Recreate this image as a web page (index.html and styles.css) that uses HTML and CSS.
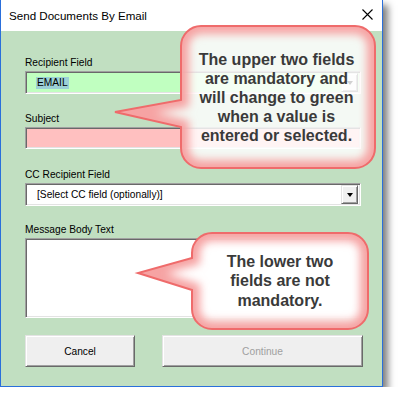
FILE: index.html
```html
<!DOCTYPE html>
<html>
<head>
<meta charset="utf-8">
<link rel="stylesheet" href="styles.css">
</head>
<body>
<div class="window">
  <div class="titlebar">
    <span class="title">Send Documents By Email</span>
    <svg class="close" width="11" height="11" viewBox="0 0 11 11"><path d="M0.5 0.5 L10.5 10.5 M10.5 0.5 L0.5 10.5" stroke="#000" stroke-width="1.1" fill="none"/></svg>
  </div>
  <div class="content">
    <div class="group g-recipient">
      <div class="label">Recipient Field</div>
      <div class="field combo green"><span class="sel">EMAIL</span><span class="ddbtn"><span class="arrow"></span></span></div>
    </div>
    <div class="group g-subject">
      <div class="label">Subject</div>
      <div class="field pink"></div>
    </div>
    <div class="group g-cc">
      <div class="label">CC Recipient Field</div>
      <div class="field combo white"><span class="val">[Select CC field (optionally)]</span><span class="ddbtn"><span class="arrow"></span></span></div>
    </div>
    <div class="group g-msg">
      <div class="label">Message Body Text</div>
      <div class="field memo white"></div>
    </div>
    <div class="buttons">
      <div class="btn cancel">Cancel</div>
      <div class="btn continue disabled">Continue</div>
    </div>
  </div>

  <div class="callout c1">
    <svg class="cshape" width="194" height="142" viewBox="0 0 194 142">
      <defs>
        <path id="p1" d="M20,0 H174 A20,20 0 0 1 194,20 V122 A20,20 0 0 1 174,142 H20 A20,20 0 0 1 0,122 V101 L-66,86 L0,74 V20 A20,20 0 0 1 20,0 Z"/>
        <clipPath id="clip1"><use href="#p1"/></clipPath>
        <filter id="blur1" filterUnits="userSpaceOnUse" x="-120" y="-60" width="420" height="280"><feGaussianBlur stdDeviation="4"/></filter>
      </defs>
      <use href="#p1" fill="rgba(255,255,255,0.82)"/>
      <g clip-path="url(#clip1)"><use href="#p1" fill="none" stroke="#f6a3a3" stroke-width="16" filter="url(#blur1)"/></g>
      <use href="#p1" fill="none" stroke="#ef6b6b" stroke-width="2"/>
    </svg>
    <div class="ctext">The upper two fields<br>are mandatory and<br>will change to green<br>when a value is<br>entered or selected.</div>
  </div>

  <div class="callout c2">
    <svg class="cshape" width="176" height="96" viewBox="0 0 176 96">
      <defs>
        <path id="p2" d="M20,0 H156 A20,20 0 0 1 176,20 V76 A20,20 0 0 1 156,96 H20 A20,20 0 0 1 0,76 V57 L-54,40 L0,25 V20 A20,20 0 0 1 20,0 Z"/>
        <clipPath id="clip2"><use href="#p2"/></clipPath>
        <filter id="blur2" filterUnits="userSpaceOnUse" x="-120" y="-60" width="420" height="240"><feGaussianBlur stdDeviation="4"/></filter>
      </defs>
      <use href="#p2" fill="rgba(255,255,255,0.9)"/>
      <g clip-path="url(#clip2)"><use href="#p2" fill="none" stroke="#f6a3a3" stroke-width="16" filter="url(#blur2)"/></g>
      <use href="#p2" fill="none" stroke="#ef6b6b" stroke-width="2"/>
    </svg>
    <div class="ctext">The lower two<br>fields are not<br>mandatory.</div>
  </div>
</div>
</body>
</html>
```

FILE: styles.css
```css
html, body {
  margin: 0;
  padding: 0;
  background: #ffffff;
}

.window {
  position: relative;
  width: 381px;
  height: 386px;
  border: 1px solid #2a6fdb;
  border-top: none;
  background: #c1dfc1;
  box-shadow: 5px 5px 7px rgba(0, 0, 0, 0.5);
  font-family: "Liberation Sans", Arial, sans-serif;
  color: #000;
}

.titlebar {
  height: 31px;
  background: #ffffff;
  display: flex;
  align-items: center;
  justify-content: space-between;
  padding: 0 9px 0 8px;
}

.title {
  font-size: 11.6px;
  line-height: 31px;
  color: #000;
}

.close {
  display: block;
  margin-top: -2px;
}

.content {
  padding: 25px 0 0 24px;
  display: flex;
  flex-direction: column;
}

.label {
  font-size: 10.2px;
  line-height: 13px;
  height: 13px;
  margin-bottom: 2px;
}

.g-subject { margin-top: 18px; }
.g-cc { margin-top: 19px; }
.g-msg { margin-top: 17px; }

.field {
  box-sizing: border-box;
  width: 336px;
  height: 23px;
  border-style: solid;
  border-width: 1px;
  border-color: #a0a0a0 #ffffff #ffffff #a0a0a0;
  box-shadow: inset 1px 1px 0 #696969, inset -1px -1px 0 #e3e3e3;
  display: flex;
  align-items: center;
  font-size: 10.2px;
}

.green { background: #c0ffc0; }
.pink { background: #ffc0c0; height: 22px; }
.white { background: #ffffff; }
.memo { height: 80px; }

.combo {
  padding: 2px 2px 2px 11px;
}

.sel {
  background: #9cd0d6;
  line-height: 12px;
  padding: 0 1px;
  margin-left: -1px;
}

.val {
  line-height: 12px;
}

.ddbtn {
  margin-left: auto;
  box-sizing: border-box;
  width: 17px;
  height: 19px;
  background: #f0f0f0;
  border-style: solid;
  border-width: 1px;
  border-color: #e3e3e3 #696969 #696969 #e3e3e3;
  box-shadow: inset 1px 1px 0 #ffffff, inset -1px -1px 0 #a0a0a0;
  display: flex;
  align-items: center;
  justify-content: center;
}

.arrow {
  width: 0;
  height: 0;
  border-left: 3.5px solid transparent;
  border-right: 3.5px solid transparent;
  border-top: 4px solid #000;
}

.buttons {
  margin-top: 17px;
  display: flex;
  gap: 27px;
}

.btn {
  box-sizing: border-box;
  height: 32px;
  background: #efefef;
  border-style: solid;
  border-width: 1px;
  border-color: #e3e3e3 #696969 #696969 #e3e3e3;
  box-shadow: inset 1px 1px 0 #ffffff, inset -1px -1px 0 #a0a0a0;
  display: flex;
  align-items: center;
  justify-content: center;
  font-size: 10.2px;
}

.cancel { width: 110px; }
.continue { width: 201px; }
.disabled { color: #a0a0a0; }

.callout {
  position: absolute;
  display: flex;
  align-items: center;
  justify-content: center;
}

.c1 { left: 180px; top: 26px; width: 194px; height: 142px; }
.c2 { left: 191px; top: 233px; width: 176px; height: 96px; }

.cshape {
  position: absolute;
  left: 0;
  top: 0;
  overflow: visible;
}

.ctext {
  position: relative;
  font-weight: bold;
  font-size: 16px;
  line-height: 19px;
  color: #3a3a3a;
  text-align: center;
}

.c1 .ctext { padding-right: 3px; }
.c2 .ctext { line-height: 19.5px; }
```
